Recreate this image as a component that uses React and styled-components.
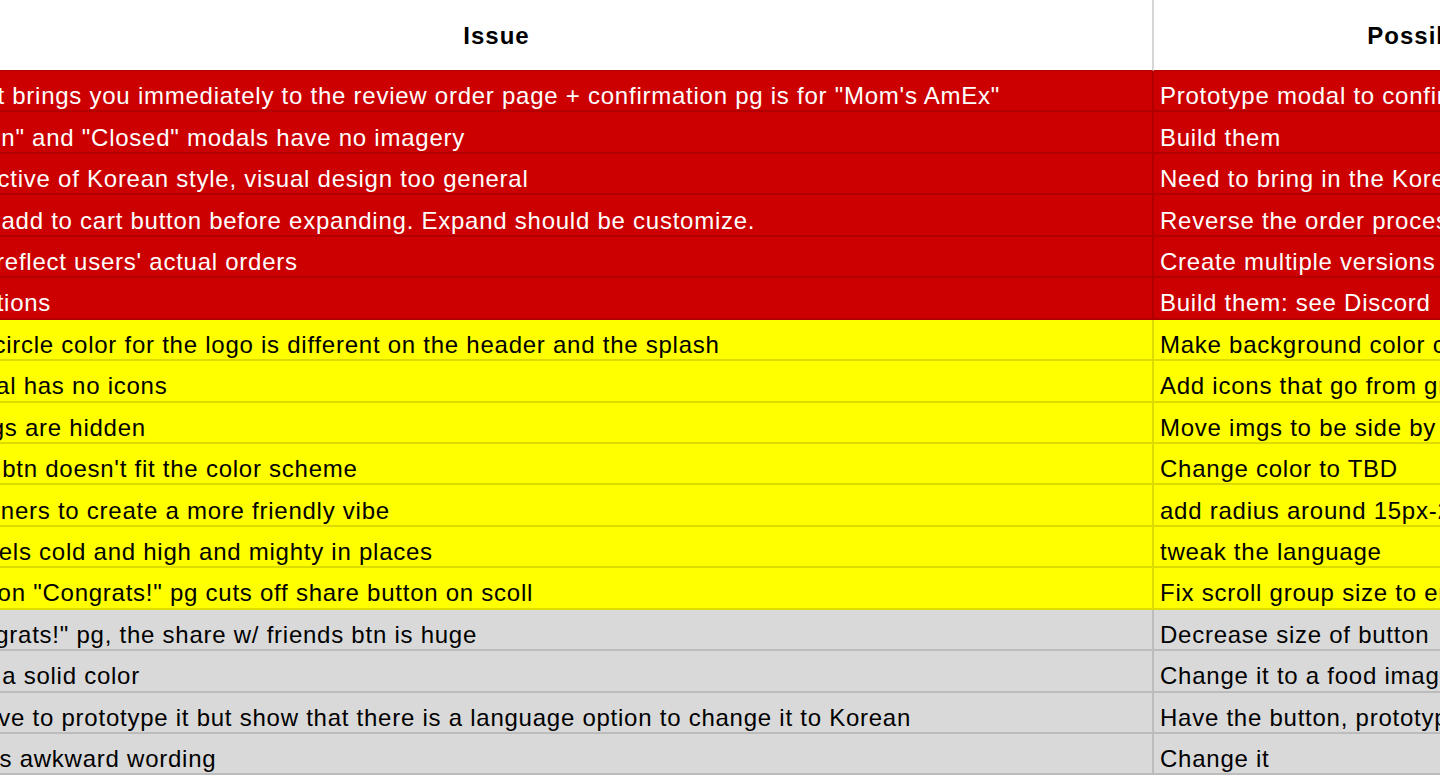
import React from "react";
import styled, { createGlobalStyle, css } from "styled-components";

const GlobalStyle = createGlobalStyle`
    html, body {
        margin: 0;
        padding: 0;
        background: #ffffff;
        overflow: hidden;
    }
    body {
        font-family: "Liberation Sans", Arial, sans-serif;
    }
`;

const tones = {
    red: { bg: "#cc0000", line: "#b10000", ink: "#ffffff" },
    yellow: { bg: "#ffff00", line: "#dcdc00", ink: "#000000" },
    gray: { bg: "#d9d9d9", line: "#bcbcbc", ink: "#000000" },
};

// the sheet is scrolled sideways, so the issue column starts off screen
const Viewport = styled.div`
    width: 1440px;
    height: 780px;
    overflow: hidden;
`;

const Sheet = styled.div`
    display: grid;
    grid-template-columns: 1313px 645px;
    grid-template-rows: 71px;
    grid-auto-rows: 41.44px;
    margin-left: -159px;
    width: max-content;
`;

const HeaderCell = styled.div`
    display: flex;
    align-items: center;
    justify-content: center;
    box-sizing: border-box;
    background: #ffffff;
    color: #000000;
    font-size: 24px;
    font-weight: 700;
    letter-spacing: 1px;
    padding-top: 2px;
    border-bottom: 1px solid #b10000;
    ${(p) => p.$first && css`
        border-right: 2px solid #d6d6d6;
    `}
`;

const Cell = styled.div`
    display: flex;
    align-items: center;
    box-sizing: border-box;
    padding: 11px 6px 0;
    white-space: nowrap;
    overflow: hidden;
    font-size: 24px;
    letter-spacing: 0.75px;
    background: ${(p) => tones[p.$tone].bg};
    color: ${(p) => tones[p.$tone].ink};
    border-bottom: 2px solid ${(p) => tones[p.$tone].line};
    ${(p) => p.$first && css`
        border-right: 2px solid ${tones[p.$tone].line};
    `}
`;

const rows = [
    { tone: "red", issue: "Cart checkout brings you immediately to the review order page + confirmation pg is for \"Mom's AmEx\"", fix: "Prototype modal to confirm payment method" },
    { tone: "red", issue: "Existing \"Open\" and \"Closed\" modals have no imagery", fix: "Build them" },
    { tone: "red", issue: "Feel not reflective of Korean style, visual design too general", fix: "Need to bring in the Korean aesthetic" },
    { tone: "red", issue: "Menu has no add to cart button before expanding. Expand should be customize.", fix: "Reverse the order process" },
    { tone: "red", issue: "Photos don't reflect users' actual orders", fix: "Create multiple versions" },
    { tone: "red", issue: "Needs animations", fix: "Build them: see Discord" },
    { tone: "yellow", issue: "The backing circle color for the logo is different on the header and the splash", fix: "Make background color consistent" },
    { tone: "yellow", issue: "The info modal has no icons", fix: "Add icons that go from gray to color" },
    { tone: "yellow", issue: "Most dish imgs are hidden", fix: "Move imgs to be side by side" },
    { tone: "yellow", issue: "The continue btn doesn't fit the color scheme", fix: "Change color to TBD" },
    { tone: "yellow", issue: "Curve the corners to create a more friendly vibe", fix: "add radius around 15px-20px" },
    { tone: "yellow", issue: "Messaging feels cold and high and mighty in places", fix: "tweak the language" },
    { tone: "yellow", issue: "Scroll region on \"Congrats!\" pg cuts off share button on scoll", fix: "Fix scroll group size to end at share button" },
    { tone: "gray", issue: "Also on \"Congrats!\" pg, the share w/ friends btn is huge", fix: "Decrease size of button" },
    { tone: "gray", issue: "Splash BG is a solid color", fix: "Change it to a food image" },
    { tone: "gray", issue: "We do not have to prototype it but show that there is a language option to change it to Korean", fix: "Have the button, prototype the option" },
    { tone: "gray", issue: "The footer has awkward wording", fix: "Change it" },
];

export default function App() {
    return (<>
        <GlobalStyle />
        <Viewport>
            <Sheet>
                <HeaderCell $first>Issue</HeaderCell>
                <HeaderCell>Possible Solution</HeaderCell>
                {rows.map((row, id) => (
                    <React.Fragment key={id}>
                        <Cell $tone={row.tone} $first>{row.issue}</Cell>
                        <Cell $tone={row.tone}>{row.fix}</Cell>
                    </React.Fragment>
                ))}
            </Sheet>
        </Viewport>
    </>);
}
